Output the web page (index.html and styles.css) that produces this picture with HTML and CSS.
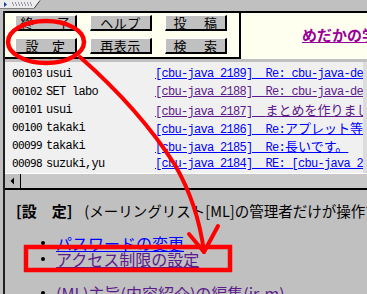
FILE: index.html
```html
<!DOCTYPE html>
<html lang="ja">
<head>
<meta charset="utf-8">
<title>めだかの学校</title>
<link rel="stylesheet" href="styles.css">
</head>
<body>
<div class="page">
  <div class="topbar">
    <svg class="tab" width="42" height="9" viewBox="0 0 42 9">
      <path d="M0 0H40L34 8H0Z" fill="#ececec"/>
      <path d="M34 8.5L40 0.5" stroke="#404040" stroke-width="1"/>
      <path d="M0 8.5H34" stroke="#808080" stroke-width="1"/>
      <path d="M4 2L7 4.5L4 7Z" fill="#203c9c"/>
      <path d="M12 3h1M15 3h1M18 3h1M21 3h1M24 3h1M27 3h1M30 3h1M13 5h1M16 5h1M19 5h1M22 5h1M25 5h1M28 5h1M31 5h1" stroke="#404060" stroke-width="1"/>
    </svg>
  </div>

  <div class="frames">
    <div class="topframe">
      <div class="btnbox">
        <span class="btn g23"><span>終</span><span>了</span></span>
        <span class="btn">ヘルプ</span>
        <span class="btn g17"><span>投</span><span>稿</span></span>
        <span class="btn g13"><span>設</span><span>定</span></span>
        <span class="btn">再表示</span>
        <span class="btn g17"><span>検</span><span>索</span></span>
      </div>
      <div class="titlebox"><a class="title" href="#">めだかの学校</a></div>
    </div>

    <div class="listframe">
      <div class="listbody">
        <div class="list">
          <div class="row"><span class="num">00103</span><span class="name">usui</span><a class="lnk" href="#">[cbu-java 2189]&nbsp; Re: cbu-java-dev</a></div>
          <div class="row"><span class="num">00102</span><span class="name">SET labo</span><a class="lnk visited" href="#">[cbu-java 2188]&nbsp; Re: cbu-java-dev</a></div>
          <div class="row"><span class="num">00101</span><span class="name">usui</span><a class="lnk visited" href="#">[cbu-java 2187]&nbsp; <span class="jp">まとめを作りました</span></a></div>
          <div class="row"><span class="num">00100</span><span class="name">takaki</span><a class="lnk" href="#">[cbu-java 2186]&nbsp; Re:<span class="jp">アプレット等</span></a></div>
          <div class="row"><span class="num">00099</span><span class="name">takaki</span><a class="lnk" href="#">[cbu-java 2185]&nbsp; Re:<span class="jp">長いです。</span></a></div>
          <div class="row"><span class="num">00098</span><span class="name">suzuki,yu</span><a class="lnk" href="#">[cbu-java 2184]&nbsp; RE: [cbu-java 2183]</a></div>
        </div>
        <div class="vstrip"></div>
      </div>
      <div class="hscroll">
        <span class="arrowbtn">
          <svg width="15" height="14" viewBox="0 0 15 14"><path d="M9 3.5V10.5L5.5 7Z" fill="#000"/></svg>
        </span>
        <span class="track"></span>
      </div>
    </div>

    <div class="bottomframe">
      <p class="head"><b class="htitle">[設　定]</b><span class="desc">(メーリングリスト[ML]の管理者だけが操作できます)</span></p>
      <ul class="menu">
        <li><a class="mlink" href="#">パスワードの変更</a></li>
        <li><a class="mlink visited" href="#">アクセス制限の設定</a></li>
      </ul>
      <ul class="menu second">
        <li><a class="mlink visited" href="#">(ML)主旨(内容紹介)の編集(ir-m)</a></li>
      </ul>
    </div>
  </div>

  <svg class="annot" width="367" height="294" viewBox="0 0 367 294">
    <ellipse cx="46" cy="42" rx="38" ry="21" fill="none" stroke="#ff0000" stroke-width="4.5"/>
    <path d="M80 57 Q140 110 175 165 Q198 205 204 252" fill="none" stroke="#ff0000" stroke-width="4" stroke-linecap="round"/>
    <path d="M189 234 L204 252 L218 226" fill="none" stroke="#ff0000" stroke-width="4" stroke-linecap="round" stroke-linejoin="round"/>
    <rect x="26" y="247" width="204" height="23" fill="none" stroke="#ff0000" stroke-width="4.5"/>
  </svg>
</div>
</body>
</html>
```

FILE: styles.css
```css
* { box-sizing: border-box; }

html, body {
  margin: 0;
  padding: 0;
}

body {
  background: #c0c0c0;
  font-family: "Noto Sans CJK JP", "Noto Sans", sans-serif;
  overflow: hidden;
}

.page {
  position: relative;
  width: 367px;
  height: 294px;
  overflow: hidden;
  background: #c0c0c0;
}

.topbar {
  height: 11px;
}

.tab {
  display: block;
}

.frames {
  margin-left: 3px;
  border-left: 2px solid #202020;
  height: 283px;
}

/* ---------- top frame ---------- */
.topframe {
  display: flex;
  height: 48px;
  border-top: 2px solid #000;
}

.btnbox {
  width: 236px;
  background: #fffff0;
  border-right: 2px solid #000;
  border-bottom: 2px solid #000;
  padding: 2px 0 0 10px;
  display: grid;
  grid-template-columns: 62px 62px 62px;
  grid-auto-rows: 16px;
  column-gap: 13px;
  row-gap: 7px;
  align-content: start;
}

.btn {
  display: flex;
  justify-content: center;
  align-items: center;
  background: #c0c0c0;
  border-top: 1px solid #fff;
  border-left: 1px solid #fff;
  border-right: 2px solid #000;
  border-bottom: 2px solid #000;
  font-size: 13px;
  line-height: 13px;
  color: #000;
  letter-spacing: 0.5px;
}

.btn.g23 { gap: 23px; }
.btn.g17 { gap: 17px; }
.btn.g13 { gap: 13px; }

.titlebox {
  flex: 1;
  background: #fffff0;
  padding: 13px 0 0 61px;
  white-space: nowrap;
  overflow: hidden;
  font-size: 15px;
  line-height: 17px;
}

.title {
  font-size: 15px;
  line-height: 17px;
  font-weight: bold;
  color: #990099;
  text-decoration: underline;
}

/* ---------- list frame ---------- */
.listframe {
  margin-top: 3px;
  background: #f0f0f0;
  border-bottom: 2px solid #000;
}

.listbody {
  display: flex;
  height: 111px;
}

.list {
  flex: 1;
  overflow: hidden;
  padding: 3px 0 0 7px;
}

.vstrip {
  width: 4px;
  background: #dcdcdc;
}

.row {
  display: grid;
  grid-template-columns: 34px 109px 1fr;
  height: 18px;
  line-height: 18px;
  white-space: nowrap;
  font-size: 12px;
}

.num {
  font-family: "DejaVu Sans Mono", monospace;
  font-size: 11px;
  letter-spacing: -0.6px;
  color: #000;
}

.name {
  font-family: "Liberation Mono", monospace;
  font-size: 12px;
  letter-spacing: -0.7px;
  color: #000;
}

.lnk {
  font-family: "Liberation Mono", monospace;
  font-size: 12px;
  letter-spacing: -0.7px;
  color: #0000ff;
  text-decoration: underline;
  overflow: hidden;
}

.lnk.visited { color: #5c1a8c; }

.jp {
  font-family: "Noto Sans CJK JP", sans-serif;
  font-size: 13px;
  letter-spacing: 0;
}

.hscroll {
  display: flex;
  height: 15px;
  background: #c8c8c8;
  border-top: 1px solid #fff;
}

.arrowbtn {
  width: 16px;
  background: #c0c0c0;
  border-right: 1px solid #000;
  display: flex;
}

.track {
  flex: 1;
}

/* ---------- bottom frame ---------- */
.bottomframe {
  padding: 10px 0 0 11px;
  color: #000;
}

.head {
  margin: 0;
  line-height: 20px;
  white-space: nowrap;
}

.htitle {
  font-size: 15px;
  font-weight: bold;
}

.desc {
  font-size: 14.5px;
  margin-left: 12px;
}

.menu {
  list-style: none;
  margin: 14px 0 0 0;
  padding: 0 0 0 40px;
}

.menu.second {
  margin-top: 18px;
}

.menu li {
  display: flex;
  align-items: center;
  height: 16px;
  white-space: nowrap;
}

.menu li::before {
  content: "";
  width: 4px;
  height: 4px;
  border-radius: 50%;
  background: #000;
  margin-left: -15px;
  margin-right: 11px;
  flex: none;
}

.mlink {
  font-size: 16px;
  line-height: 16px;
  color: #0000ff;
  text-decoration: underline;
}

.mlink.visited { color: #5c1a8c; }

/* ---------- annotation overlay ---------- */
.annot {
  position: absolute;
  left: 0;
  top: 0;
  pointer-events: none;
}
```
